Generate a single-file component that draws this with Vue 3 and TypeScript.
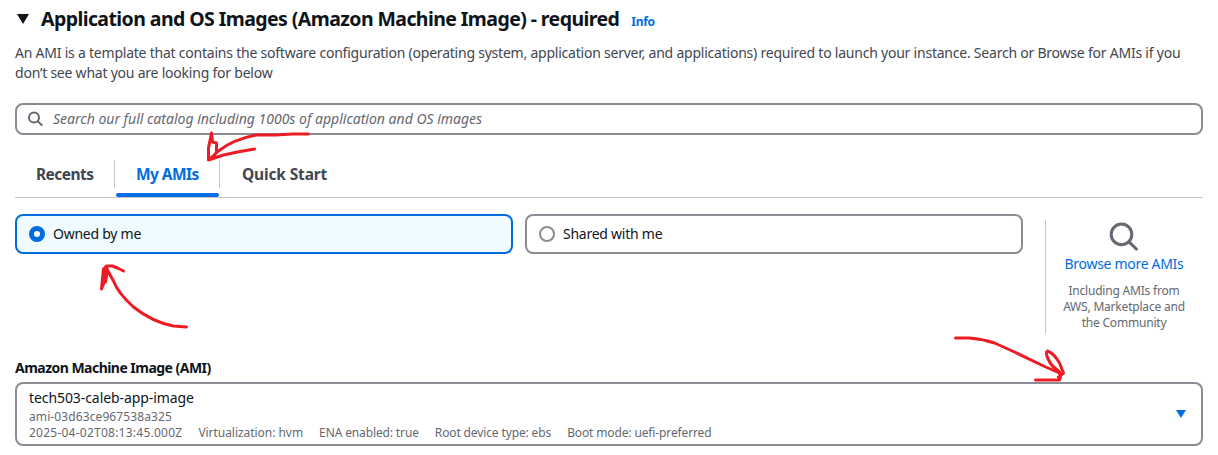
<script setup lang="ts">
interface Tab {
  label: string
  active: boolean
}

const tabs: Tab[] = [
  { label: 'Recents', active: false },
  { label: 'My AMIs', active: true },
  { label: 'Quick Start', active: false },
]

const owners = [
  { label: 'Owned by me', selected: true },
  { label: 'Shared with me', selected: false },
]

const imageFacts: string[] = [
  '2025-04-02T08:13:45.000Z',
  'Virtualization: hvm',
  'ENA enabled: true',
  'Root device type: ebs',
  'Boot mode: uefi-preferred',
]
</script>

<template>
  <main class="panel">
    <header class="heading">
      <svg class="caret" width="12" height="10" viewBox="0 0 12 10"><path d="M0 0H12L6 10Z" fill="#0f141a" /></svg>
      <h2>Application and OS Images (Amazon Machine Image) - required</h2>
      <a class="info">Info</a>
    </header>

    <p class="description">
      An AMI is a template that contains the software configuration (operating system, application server, and applications) required to launch your instance. Search or Browse for AMIs if you<br />
      don’t see what you are looking for below
    </p>

    <div class="search">
      <svg width="16" height="16" viewBox="0 0 16 16" fill="none" stroke="#656871" stroke-width="2">
        <circle cx="6" cy="6.5" r="5" /><path d="M9.8 10.2L14.3 14.6" />
      </svg>
      <span class="placeholder">Search our full catalog including 1000s of application and OS images</span>
    </div>

    <nav class="tabs">
      <div v-for="(tab, i) in tabs" :key="tab.label" class="tab" :class="[`tab-${i}`, { active: tab.active }]">
        <span>{{ tab.label }}</span>
      </div>
    </nav>

    <section class="sources">
      <div class="tiles">
        <div v-for="owner in owners" :key="owner.label" class="tile" :class="{ selected: owner.selected }">
          <i class="radio"></i>
          <span>{{ owner.label }}</span>
        </div>
      </div>
      <aside class="browse">
        <svg width="30" height="30" viewBox="0 0 30 30" fill="none" stroke="#656871" stroke-width="3">
          <circle cx="12.5" cy="12.4" r="10.3" /><path d="M19.8 19.6L28.3 28" />
        </svg>
        <a class="browse-link">Browse more AMIs</a>
        <p>Including AMIs from<br />AWS, Marketplace and<br />the Community</p>
      </aside>
    </section>

    <div class="label">Amazon Machine Image (AMI)</div>
    <div class="select">
      <div class="option">
        <div class="name">tech503-caleb-app-image</div>
        <div class="small id">ami-03d63ce967538a325</div>
        <div class="small facts">
          <span v-for="(fact, i) in imageFacts" :key="fact" :class="`fact-${i}`">{{ fact }}</span>
        </div>
      </div>
      <svg width="10" height="8" viewBox="0 0 10 8"><path d="M0 0H10L5 8Z" fill="#006ce0" /></svg>
    </div>

    <svg class="marks" width="1218" height="455" viewBox="0.5 0 1218 455" fill="none" stroke="#ed1c24" stroke-width="3" stroke-linecap="round" stroke-linejoin="round">
      <path d="M309 134L293 134L276 135L257 135C241 138 228 144 219 151L209 160L209 148L212 133L213 142L217 143L217 152L214 157L209 160L224 155L238 152L255 149" />
      <path d="M187 327L174 326C158 323 144 315 134 307C124 298 117 289 114 281L109 272L107 268L104 284L102 289L104 269L107 266L113 266L118 268L124 271M105 276L108 270L106 282" />
      <path d="M956 338L970 338C981 339 989 341 995 343L1015 352L1044 366L1060 373L1061 377L1060 380L1036 380M1059 377L1064 373L1060 363C1056 356 1051 352 1048 351C1045 353 1049 361 1053 366L1060 372" />
    </svg>
  </main>
</template>

<style>
body {
  background: #fff;
}
</style>

<style scoped>
.panel {
  position: relative;
  box-sizing: border-box;
  width: 1218px;
  height: 455px;
  padding: 8px 15px 0;
  overflow: hidden;
  font-family: 'Noto Sans', 'Open Sans', sans-serif;
  font-size: 14px;
  line-height: 20px;
  letter-spacing: -0.3px;
  color: #0f141a;
  white-space: nowrap;
}
.heading {
  display: flex;
  align-items: center;
  height: 24px;
}
.caret {
  margin: 0 12px 2px 2px;
}
h2 {
  margin: 0 12px 2px 0;
  font-size: 19.5px;
  line-height: 24px;
  letter-spacing: -0.58px;
}
.info {
  margin-top: 4px;
  font-size: 12px;
  font-weight: 700;
  color: #006ce0;
}
.description {
  margin: 11px 0 0;
  height: 60px;
  letter-spacing: -0.225px;
  color: #424650;
}
.search {
  display: flex;
  align-items: center;
  box-sizing: border-box;
  height: 32px;
  padding-left: 11px;
  border: 2px solid #8c8c94;
  border-radius: 8px;
}
.placeholder {
  margin-left: 9px;
  font-style: italic;
  letter-spacing: 0;
  color: #656871;
}
.tabs {
  display: flex;
  box-sizing: border-box;
  height: 63px;
  padding-top: 25px;
  border-bottom: 1px solid #c6c6cd;
}
.tab {
  position: relative;
  box-sizing: border-box;
  height: 28px;
  padding-left: 21px;
  border-right: 1px solid #c6c6cd;
  font-size: 15.5px;
  line-height: 29px;
  letter-spacing: -0.55px;
  font-weight: 700;
  color: #424650;
}
.tab-0 {
  width: 100px;
}
.tab-1 {
  width: 105px;
}
.tab-2 {
  padding-left: 22px;
  border: 0;
  letter-spacing: -0.15px;
}
.tab.active {
  color: #006ce0;
}
.tab.active::after {
  content: '';
  position: absolute;
  left: 1px;
  right: 0;
  bottom: -9px;
  height: 4px;
  border-radius: 2px;
  background: #006ce0;
}
.sources {
  display: flex;
  height: 136px;
  padding-top: 16px;
  box-sizing: border-box;
}
.tiles {
  display: flex;
  gap: 12px;
}
.tile {
  display: flex;
  align-items: center;
  gap: 8px;
  box-sizing: border-box;
  width: 498px;
  height: 40px;
  padding-left: 12px;
  border: 2px solid #8c8c94;
  border-radius: 8px;
  letter-spacing: -0.25px;
}
.tile.selected {
  border-color: #006ce0;
  background: #f0fbff;
}
.radio {
  box-sizing: border-box;
  width: 16px;
  height: 16px;
  border: 2px solid #8c8c94;
  border-radius: 50%;
  background: #fff;
}
.selected .radio {
  border: 5px solid #006ce0;
}
.browse {
  display: flex;
  flex-direction: column;
  align-items: center;
  box-sizing: border-box;
  width: 157px;
  height: 114px;
  margin: 6px 0 0 22px;
  padding-top: 2px;
  border-left: 1px solid #c6c6cd;
}
.browse-link {
  margin-top: 2px;
  color: #006ce0;
}
.browse p {
  margin: 9px 0 0;
  font-size: 12px;
  line-height: 16px;
  letter-spacing: -0.2px;
  text-align: center;
  color: #656871;
}
.label {
  height: 24px;
  margin-top: 24px;
  font-weight: 700;
  letter-spacing: -0.53px;
}
.select {
  display: flex;
  align-items: center;
  justify-content: space-between;
  box-sizing: border-box;
  height: 64px;
  padding: 0 15px 0 12px;
  border: 2px solid #8c8c94;
  border-radius: 8px;
}
.name {
  letter-spacing: -0.08px;
}
.small {
  font-size: 12px;
  line-height: 16px;
  color: #656871;
}
.id {
  margin-top: 1px;
  letter-spacing: 0.1px;
}
.facts {
  display: flex;
  gap: 16px;
  letter-spacing: -0.13px;
}
.fact-0 {
  letter-spacing: 0.24px;
}
.fact-1 {
  letter-spacing: -0.04px;
}
.marks {
  position: absolute;
  inset: 0;
  pointer-events: none;
}
</style>
